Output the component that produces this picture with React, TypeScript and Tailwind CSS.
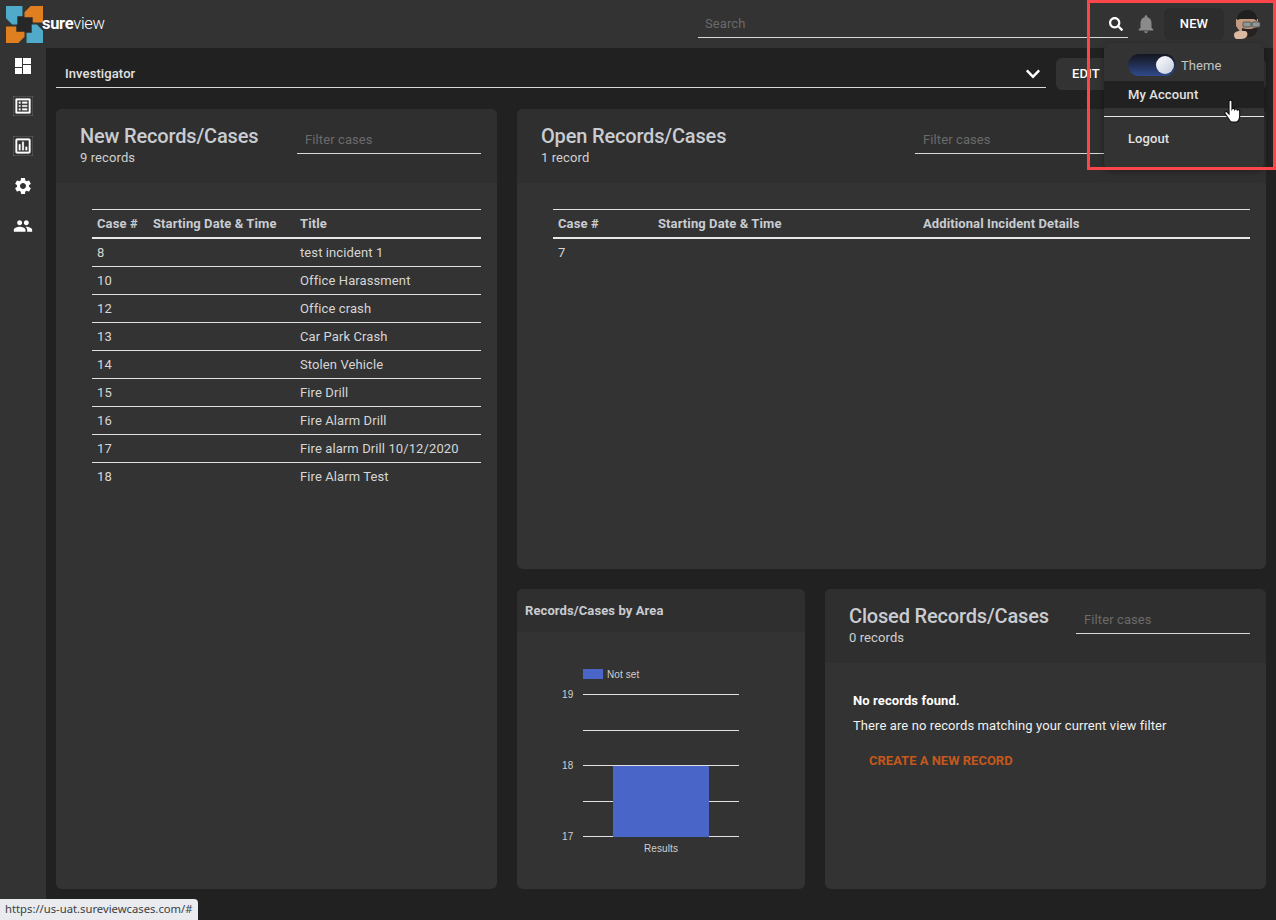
import { FaChevronDown, FaSearch } from "react-icons/fa";
import {
  MdNotifications,
  MdOutlineAssessment,
  MdOutlineListAlt,
  MdPeople,
  MdSettings,
} from "react-icons/md";

const newRecords = [
  ["8", "test incident 1"],
  ["10", "Office Harassment"],
  ["12", "Office crash"],
  ["13", "Car Park Crash"],
  ["14", "Stolen Vehicle"],
  ["15", "Fire Drill"],
  ["16", "Fire Alarm Drill"],
  ["17", "Fire alarm Drill 10/12/2020"],
  ["18", "Fire Alarm Test"],
];

const Logo = () => (
  <svg width="37" height="37" viewBox="0 0 36 36" className="shrink-0">
    <rect x="10" y="10" width="16" height="16" fill="#272727" />
    <polygon fill="#4fabc9" points="0,0 16,0 16,10 11,10 11,18 6,18 0,12" />
    <polygon fill="#df7f20" points="36,0 36,16 26,16 26,11 18,11 18,6 24,0" />
    <polygon fill="#4fabc9" points="36,36 20,36 20,26 25,26 25,18 30,18 36,24" />
    <polygon fill="#df7f20" points="0,36 0,20 10,20 10,25 18,25 18,30 12,36" />
  </svg>
);

const Avatar = () => (
  <svg width="30" height="32" viewBox="0 0 30 32" className="shrink-0">
    <path d="M5 11h22v9l-3 5H10l-5-7z" fill="#c49a80" />
    <path d="M6 12C6 5 11 2 17 2c6 0 9 4 9 11l-3-2H9z" fill="#1f1f1f" />
    <path d="M11 20c5 2 10 1 16-1 0 6-4 10-9 10s-7-4-7-9z" fill="#262220" />
    <rect x="12" y="14" width="8" height="5" rx="1" fill="#8f9a96" stroke="#444" strokeWidth="0.8" />
    <rect x="21" y="14" width="8" height="5" rx="1" fill="#8f9a96" stroke="#444" strokeWidth="0.8" />
    <path d="M3 27c0-3 3-4 6-4h4c3 0 4 2 3 5-1 2-3 3-6 3H6c-2 0-3-2-3-4z" fill="#dcb9a0" />
  </svg>
);

const HandCursor = () => (
  <svg width="18" height="24" viewBox="0 0 18 24" className="absolute top-[99px] left-[1224px]">
    <path
      d="M5 2.500c0-1.800 3-1.800 3 0V10c.6-1 2.500-.8 2.700.5.600-1 2.400-.8 2.600.5.700-.8 2.400-.4 2.400 1V17c0 3-1.500 6-3.500 6H8c-1.500 0-2.200-1.300-3.200-3L1 14.500c-.8-1.600 1.200-2.800 2.300-1.400L5 15z"
      fill="#fff"
      stroke="#111"
      strokeWidth="1.200"
    />
  </svg>
);

const DashboardIcon = () => (
  <svg width="16" height="16" viewBox="0 0 16 16" fill="#fff">
    <rect x="0" y="0" width="7" height="9" />
    <rect x="0" y="10" width="7" height="6" />
    <rect x="8" y="0" width="8" height="6" />
    <rect x="8" y="7" width="8" height="9" />
  </svg>
);

const FilterInput = ({ width }: { width: string }) => (
  <input
    placeholder="Filter cases"
    className={`${width} mt-[16px] h-[29px] border-b border-[#d8d8d8] bg-transparent px-[8px] text-[13px] outline-none placeholder:text-[#6a6a6a]`}
  />
);

const CardHead = ({ title, count, filter }: { title: string; count: string; filter: string }) => (
  <div className="flex h-[74px] justify-between rounded-t-md bg-[#2f2f2f] pl-6 pr-4">
    <div className="pt-[14px]">
      <h2 className="text-[20px] leading-[26px] font-medium tracking-[-0.17px] text-[#c9ccd1]">{title}</h2>
      <p className="text-[13px] leading-[17px] text-[#d0d0d0]">{count}</p>
    </div>
    <FilterInput width={filter} />
  </div>
);

const NavIcon = ({ children }: { children: React.ReactNode }) => (
  <div className="flex h-5 items-center justify-center text-[20px] text-white">{children}</div>
);

export default function App() {
  return (
    <div className="relative flex h-[920px] w-full flex-col overflow-hidden bg-[#212121] font-['Roboto',sans-serif] text-[13px] tracking-[0.1px] text-[#d6d6d6]">
      {/* top bar */}
      <header className="flex h-12 shrink-0 items-center bg-[#333333]">
        <div className="ml-[6px] flex items-center">
          <Logo />
          <span className="-ml-[1px] text-[16.500px] tracking-[-0.3px] text-white">
            <span className="font-bold">sure</span>
            <span className="font-light">view</span>
          </span>
        </div>
        <div className="ml-auto flex items-center">
          <input
            placeholder="Search"
            className="mt-[-1px] h-[29px] w-[430px] border-b border-[#d8d8d8] bg-transparent px-[7px] text-[13px] outline-none placeholder:text-[#6a6a6a]"
          />
          <FaSearch className="ml-[-19px] text-[14px] text-white" />
          <MdNotifications className="ml-[12px] text-[22px] text-[#8a8a8a]" />
          <button className="ml-[7px] h-8 w-[60px] rounded-md bg-[#2d2d2d] text-[13px] font-medium text-white">NEW</button>
          <div className="mr-[15px] ml-[7px]">
            <Avatar />
          </div>
        </div>
      </header>

      <div className="flex min-h-0 flex-1">
        {/* side nav */}
        <aside className="flex w-[46px] shrink-0 flex-col gap-5 bg-[#333333] pt-2">
          <NavIcon><DashboardIcon /></NavIcon>
          <NavIcon><MdOutlineListAlt stroke="currentColor" strokeWidth={0.3} /></NavIcon>
          <NavIcon><MdOutlineAssessment stroke="currentColor" strokeWidth={0.3} /></NavIcon>
          <NavIcon><MdSettings /></NavIcon>
          <NavIcon><MdPeople /></NavIcon>
        </aside>

        <main className="min-w-0 flex-1 px-[10px]">
          {/* view selector */}
          <div className="flex h-[61px] gap-[10px] pt-[10px]">
            <div className="flex h-[30px] flex-1 items-center justify-between border-b border-[#d8d8d8] pt-[2px] pr-[5px] pl-[9px] text-[13px] font-medium text-[#e2e2e2]">
              Investigator
              <FaChevronDown className="text-[16px] text-white" />
            </div>
            <button className="h-8 w-[210px] rounded-md bg-[#333333] pl-4 text-left text-[13px] font-medium text-white">EDIT</button>
          </div>

          <div className="grid grid-cols-[441px_1fr] gap-5">
            {/* new records */}
            <section className="h-[780px] rounded-md bg-[#333333]">
              <CardHead title="New Records/Cases" count="9 records" filter="w-[184px]" />
              <div className="pt-[26px] pr-4 pl-9">
                <div className="grid h-[30px] grid-cols-[56px_147px_1fr] items-center border-t border-b-2 border-t-[#e0e0e0] border-b-[#e8e8e8] pl-[5px] font-bold text-[#c9ccd1]">
                  <span>Case #</span>
                  <span>Starting Date &amp; Time</span>
                  <span>Title</span>
                </div>
                {newRecords.map(([id, title], i) => (
                  <div
                    key={id}
                    className={`grid h-[28px] grid-cols-[56px_147px_1fr] items-center pl-[5px] ${i < newRecords.length - 1 ? "border-b border-[#e0e0e0]" : ""}`}
                  >
                    <span>{id}</span>
                    <span />
                    <span>{title}</span>
                  </div>
                ))}
              </div>
            </section>

            <div className="flex flex-col gap-5">
              {/* open records */}
              <section className="h-[460px] rounded-md bg-[#333333]">
                <CardHead title="Open Records/Cases" count="1 record" filter="w-[335px]" />
                <div className="pt-[26px] pr-4 pl-9">
                  <div className="grid h-[30px] grid-cols-[100px_265px_1fr] items-center border-t border-b-2 border-t-[#e0e0e0] border-b-[#e8e8e8] pl-[5px] font-bold text-[#c9ccd1]">
                    <span>Case #</span>
                    <span>Starting Date &amp; Time</span>
                    <span>Additional Incident Details</span>
                  </div>
                  <div className="grid h-[28px] grid-cols-[100px_265px_1fr] items-center pl-[5px]">
                    <span>7</span>
                  </div>
                </div>
              </section>

              <div className="grid grid-cols-[288px_1fr] gap-5">
                {/* chart */}
                <section className="h-[300px] rounded-md bg-[#333333]">
                  <div className="flex h-[43px] items-center rounded-t-md bg-[#2f2f2f] pl-2 font-bold text-[#c9ccd1]">
                    Records/Cases by Area
                  </div>
                  <svg width="288" height="257" viewBox="517 632 288 257" className="block font-['Liberation_Sans',sans-serif]">
                    <rect x="583" y="669" width="20" height="10" fill="#4a65c8" />
                    <text x="607" y="678" fontSize="10" fill="#d0d0d0">Not set</text>
                    {[694.5, 730.5, 765.5, 801.5, 836.5].map((y) => (
                      <line key={y} x1="583" x2="739" y1={y} y2={y} stroke="#e0e0e0" strokeWidth="1" />
                    ))}
                    <rect x="613" y="766" width="96" height="71" fill="#4a65c8" />
                    <text x="562" y="698" fontSize="10" fill="#d0d0d0">19</text>
                    <text x="562" y="769" fontSize="10" fill="#d0d0d0">18</text>
                    <text x="562" y="840" fontSize="10" fill="#d0d0d0">17</text>
                    <text x="661" y="852" fontSize="10" fill="#d0d0d0" textAnchor="middle">Results</text>
                  </svg>
                </section>

                {/* closed records */}
                <section className="h-[300px] rounded-md bg-[#333333]">
                  <CardHead title="Closed Records/Cases" count="0 records" filter="w-[174px]" />
                  <div className="pt-[28px] pl-7">
                    <p className="font-bold text-white">No records found.</p>
                    <p className="mt-[5px] text-[#f0f0f0]">There are no records matching your current view filter</p>
                    <button className="mt-[16px] ml-4 text-[13px] font-bold tracking-normal text-[#c5581c]">CREATE A NEW RECORD</button>
                  </div>
                </section>
              </div>
            </div>
          </div>
        </main>
      </div>

      {/* account menu */}
      <div className="absolute top-[43px] left-[1104px] w-[160px] rounded-md bg-[#333333] pb-[9px] shadow-[0_2px_6px_rgba(0,0,0,0.35)]">
        <div className="flex h-[38px] items-center gap-[5px] pt-[6px] pl-6">
          <div className="relative h-[22px] w-[48px] rounded-full bg-gradient-to-b from-[#14161f] to-[#2f4a8c]">
            <div className="absolute top-[2px] right-[2px] h-[18px] w-[18px] rounded-full bg-gradient-to-br from-white to-[#c4cbdc]" />
          </div>
          <span className="mt-[1px] text-[#c4c4c4]">Theme</span>
        </div>
        <div className="flex h-[27px] items-center bg-[#212121] pl-6 font-medium text-[#e2e2e2]">My Account</div>
        <div className="mt-2 h-[1px] bg-[#e8e8e8]" />
        <div className="flex h-[43px] items-center pl-6 font-medium text-[#e2e2e2]">Logout</div>
      </div>

      <HandCursor />

      {/* annotation */}
      <div className="pointer-events-none absolute top-0 left-[1087px] h-[170px] w-[189px] border-[3px] border-[#fb474b]" />

      {/* browser status bubble */}
      <div className="absolute bottom-0 left-0 flex h-[21px] w-[198px] items-center rounded-tr-[4px] bg-[#e9ebee] pl-[5px] font-['Noto_Sans',sans-serif] text-[11.250px] tracking-normal whitespace-nowrap text-[#3c4043]">
        https://us-uat.sureviewcases.com/#
      </div>
    </div>
  );
}
